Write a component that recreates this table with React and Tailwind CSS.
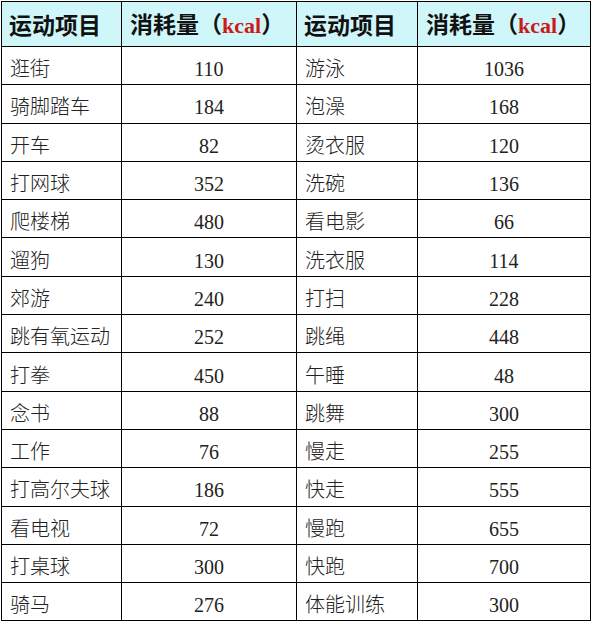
import React from "react";

const rows = [
  ["逛街", "110", "游泳", "1036"],
  ["骑脚踏车", "184", "泡澡", "168"],
  ["开车", "82", "烫衣服", "120"],
  ["打网球", "352", "洗碗", "136"],
  ["爬楼梯", "480", "看电影", "66"],
  ["遛狗", "130", "洗衣服", "114"],
  ["郊游", "240", "打扫", "228"],
  ["跳有氧运动", "252", "跳绳", "448"],
  ["打拳", "450", "午睡", "48"],
  ["念书", "88", "跳舞", "300"],
  ["工作", "76", "慢走", "255"],
  ["打高尔夫球", "186", "快走", "555"],
  ["看电视", "72", "慢跑", "655"],
  ["打桌球", "300", "快跑", "700"],
  ["骑马", "276", "体能训练", "300"],
];

const cjk = { fontFamily: '"Liberation Serif", "Noto Sans CJK SC", serif' };
const head = { fontFamily: '"Noto Sans CJK SC", sans-serif' };

function Head() {
  return (
    <>
      <td className="border-[1.5px] border-black bg-[#cff6f9] pl-[7px] pt-[1px] text-[23px] leading-none font-bold text-[#111]" style={head}>
        运动项目
      </td>
      <td className="border-[1.5px] border-black bg-[#cff6f9] pl-[8px] pt-[1px] text-[23px] leading-none font-bold text-[#111] whitespace-nowrap" style={head}>
        消耗量（<span className="text-[#cc1a1a] text-[22px] font-bold" style={{ fontFamily: '"Liberation Serif", serif' }}>kcal</span>）
      </td>
    </>
  );
}

export default function App() {
  return (
    <div className="w-[593px] h-[623px] bg-white pt-[1px] pl-[1px]">
      <table className="table-fixed border-collapse" style={{ width: 589 }}>
        <colgroup>
          <col className="w-[120px]" />
          <col className="w-[175px]" />
          <col className="w-[121px]" />
          <col className="w-[173px]" />
        </colgroup>
        <tbody>
          <tr className="h-[45px]">
            <Head />
            <Head />
          </tr>
          {rows.map((r, i) => (
            <tr key={i} className="h-[38.3px] text-[20px] text-[#222]" style={cjk}>
              <td className="border-[1.5px] border-black pl-[8px] pt-[7px] leading-none whitespace-nowrap font-light">{r[0]}</td>
              <td className="border-[1.5px] border-black pt-[7px] text-center leading-none">{r[1]}</td>
              <td className="border-[1.5px] border-black pl-[8px] pt-[7px] leading-none whitespace-nowrap font-light">{r[2]}</td>
              <td className="border-[1.5px] border-black pt-[7px] text-center leading-none">{r[3]}</td>
            </tr>
          ))}
        </tbody>
      </table>
    </div>
  );
}
